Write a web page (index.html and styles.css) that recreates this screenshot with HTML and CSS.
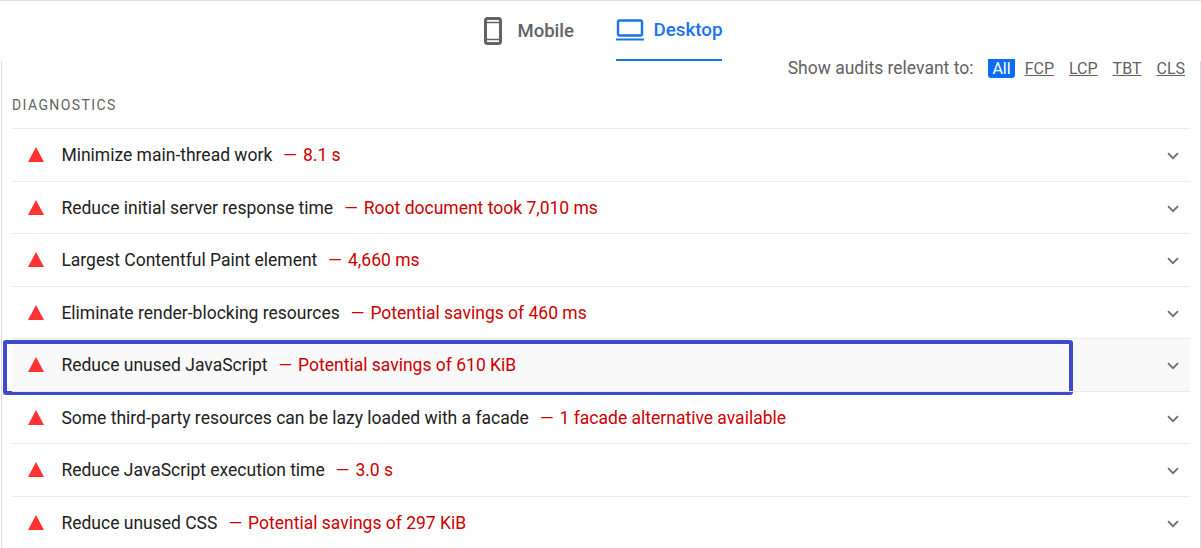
FILE: index.html
```html
<!DOCTYPE html>
<html lang="en">
<head>
    <meta charset="UTF-8">
    <meta name="viewport" content="width=device-width, initial-scale=1.0">
    <title>PageSpeed Insights - Diagnostics</title>
    <link rel="stylesheet" href="styles.css">
</head>
<body>

    <!-- Device tabs -->
    <div class="tabs">
        <div class="tab">
            <svg class="tab-icon" width="18" height="28" viewBox="0 0 18 28"><rect x="1.5" y="1.5" width="15" height="25" rx="2" fill="none" stroke="#5f6368" stroke-width="3"/><path d="M1 5.5h16M1 22.5h16" stroke="#5f6368" stroke-width="1.5"/></svg>
            <span>Mobile</span>
        </div>
        <div class="tab tab-active">
            <svg class="tab-icon" width="28" height="22" viewBox="0 0 28 22"><rect x="2" y="1.5" width="24" height="15" rx="1.5" fill="none" stroke="#1a73e8" stroke-width="2.4"/><path d="M0 20.5h28" stroke="#1a73e8" stroke-width="2"/></svg>
            <span>Desktop</span>
        </div>
    </div>

    <div class="report">
        <!-- Audit filter -->
        <div class="filter">
            <span class="filter-label">Show audits relevant to:</span>
            <span class="chip chip-active">All</span>
            <span class="chip">FCP</span>
            <span class="chip">LCP</span>
            <span class="chip">TBT</span>
            <span class="chip">CLS</span>
        </div>

        <div class="section-title">DIAGNOSTICS</div>

        <!-- Audit rows -->
        <div class="audits">
            <div class="audit">
                <span class="triangle"></span>
                <span class="audit-title">Minimize main-thread work</span>
                <span class="audit-value">8.1 s</span>
                <svg class="chevron" width="12" height="8" viewBox="0 0 12 8"><path d="M1 1.2l5 5 5-5" fill="none" stroke="#6e6e6e" stroke-width="1.8"/></svg>
            </div>
            <div class="audit">
                <span class="triangle"></span>
                <span class="audit-title">Reduce initial server response time</span>
                <span class="audit-value">Root document took 7,010 ms</span>
                <svg class="chevron" width="12" height="8" viewBox="0 0 12 8"><path d="M1 1.2l5 5 5-5" fill="none" stroke="#6e6e6e" stroke-width="1.8"/></svg>
            </div>
            <div class="audit">
                <span class="triangle"></span>
                <span class="audit-title">Largest Contentful Paint element</span>
                <span class="audit-value">4,660 ms</span>
                <svg class="chevron" width="12" height="8" viewBox="0 0 12 8"><path d="M1 1.2l5 5 5-5" fill="none" stroke="#6e6e6e" stroke-width="1.8"/></svg>
            </div>
            <div class="audit">
                <span class="triangle"></span>
                <span class="audit-title">Eliminate render-blocking resources</span>
                <span class="audit-value">Potential savings of 460 ms</span>
                <svg class="chevron" width="12" height="8" viewBox="0 0 12 8"><path d="M1 1.2l5 5 5-5" fill="none" stroke="#6e6e6e" stroke-width="1.8"/></svg>
            </div>
            <div class="audit audit-open">
                <span class="triangle"></span>
                <span class="audit-title">Reduce unused JavaScript</span>
                <span class="audit-value">Potential savings of 610 KiB</span>
                <svg class="chevron" width="12" height="8" viewBox="0 0 12 8"><path d="M1 1.2l5 5 5-5" fill="none" stroke="#6e6e6e" stroke-width="1.8"/></svg>
                <div class="highlight"></div>
            </div>
            <div class="audit">
                <span class="triangle"></span>
                <span class="audit-title">Some third-party resources can be lazy loaded with a facade</span>
                <span class="audit-value">1 facade alternative available</span>
                <svg class="chevron" width="12" height="8" viewBox="0 0 12 8"><path d="M1 1.2l5 5 5-5" fill="none" stroke="#6e6e6e" stroke-width="1.8"/></svg>
            </div>
            <div class="audit">
                <span class="triangle"></span>
                <span class="audit-title">Reduce JavaScript execution time</span>
                <span class="audit-value">3.0 s</span>
                <svg class="chevron" width="12" height="8" viewBox="0 0 12 8"><path d="M1 1.2l5 5 5-5" fill="none" stroke="#6e6e6e" stroke-width="1.8"/></svg>
            </div>
            <div class="audit">
                <span class="triangle"></span>
                <span class="audit-title">Reduce unused CSS</span>
                <span class="audit-value">Potential savings of 297 KiB</span>
                <svg class="chevron" width="12" height="8" viewBox="0 0 12 8"><path d="M1 1.2l5 5 5-5" fill="none" stroke="#6e6e6e" stroke-width="1.8"/></svg>
            </div>
        </div>
    </div>

</body>
</html>
```

FILE: styles.css
```css
html, body {
    height: 548px;
    overflow: hidden;
}

body {
    font-family: Roboto, "Liberation Sans", sans-serif;
    margin: 0;
    background-color: white;
    color: #212121;
    border-top: 1px solid #dadce0;
    box-sizing: border-box;
}

/* Tabs */
.tabs {
    height: 60px;
    display: flex;
    justify-content: center;
    gap: 42.5px;
    padding-left: 5px;
}

.tab {
    display: flex;
    align-items: center;
    gap: 16px;
    height: 60px;
    box-sizing: border-box;
    font-size: 18.5px;
    font-weight: 500;
    color: #5f6368;
    position: relative;
    z-index: 1;
}

.tab-active {
    gap: 9px;
    font-size: 18.8px;
    color: #1a73e8;
    border-bottom: 2px solid #1a73e8;
    padding-bottom: 1px;
}

/* Report */
.report {
    height: 487px;
    margin-left: 1px;
    border-left: 1px solid #dadce0;
    border-right: 1px solid #dadce0;
    padding: 0 10px;
}

.filter {
    height: 14px;
    display: flex;
    justify-content: flex-end;
    align-items: center;
    padding-right: 5px;
    font-size: 17.5px;
    color: #616161;
    position: relative;
}

.filter-label {
    margin-right: 15px;
}

.chip {
    margin-left: 15px;
    font-size: 16px;
    text-decoration: underline;
}

.filter-label + .chip {
    margin-left: 0;
}

.chip-active {
    background-color: #0b6cf5;
    color: white;
    text-decoration: none;
    padding: 0 4px;
    margin-right: -5px;
    border-radius: 0 0 3px 3px;
}

.section-title {
    font-size: 14px;
    letter-spacing: 1.4px;
    color: #616161;
    margin-top: 22px;
    height: 31px;
}

.audits {
    border-bottom: 1px solid #ebebeb;
}

/* Audit rows */
.audit {
    height: 52.5px;
    box-sizing: border-box;
    border-top: 1px solid #ebebeb;
    display: flex;
    align-items: center;
    font-size: 17.5px;
    padding-left: 16px;
    padding-top: 0.6px;
    position: relative;
}

.audit-open {
    background-color: #f9f9f9;
}

.triangle {
    width: 0;
    height: 0;
    border-left: 8px solid transparent;
    border-right: 8px solid transparent;
    border-bottom: 15px solid #ff3333;
    margin-right: 17.4px;
    margin-bottom: 1px;
}

.audit-value {
    color: #c00;
    margin-left: 11px;
}

.audit-value::before {
    content: "—";
    margin-right: 6px;
}

.chevron {
    margin-left: auto;
    margin-right: 11px;
    margin-top: 2px;
}

.highlight {
    position: absolute;
    left: -9px;
    top: 1px;
    width: 1070px;
    height: 55px;
    box-sizing: border-box;
    border: 4px solid #3f4bc9;
    border-radius: 3px;
}
```
